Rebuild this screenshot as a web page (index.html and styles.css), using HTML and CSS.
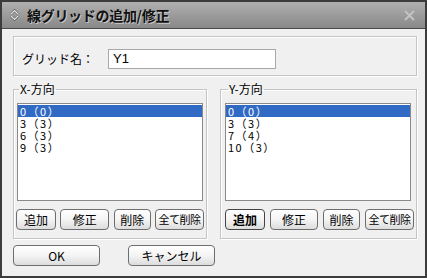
FILE: index.html
```html
<!DOCTYPE html>
<html lang="ja">
<head>
    <meta charset="UTF-8">
    <title>線グリッドの追加/修正</title>
    <link rel="stylesheet" href="styles.css">
</head>
<body>
    <div class="window">
        <div class="titlebar">
            <svg class="title-icon" width="9" height="12" viewBox="0 0 9 12">
                <path d="M1 5 L4.5 1.5 L8 5" fill="none" stroke="#555" stroke-width="2.4"/>
                <path d="M1 5 L4.5 1.5 L8 5" fill="none" stroke="#e8e8e8" stroke-width="1.2"/>
                <path d="M1 7 L4.5 10.5 L8 7" fill="none" stroke="#555" stroke-width="2.4"/>
                <path d="M1 7 L4.5 10.5 L8 7" fill="none" stroke="#e8e8e8" stroke-width="1.2"/>
            </svg>
            <span class="title">線グリッドの追加/修正</span>
            <svg class="close" width="11" height="11" viewBox="0 0 11 11">
                <path d="M1 1 L10 10 M10 1 L1 10" stroke="#c4c4c4" stroke-width="1.8"/>
            </svg>
        </div>
        <div class="content">
            <div class="namebox">
                <span class="label">グリッド名：</span>
                <input class="text" type="text" value="Y1">
            </div>
            <div class="groups">
                <fieldset class="group group-x">
                    <legend>X-方向</legend>
                    <ul class="listbox">
                        <li class="selected">0（0）</li>
                        <li>3（3）</li>
                        <li>6（3）</li>
                        <li>9（3）</li>
                    </ul>
                    <div class="btnrow">
                        <button class="btn w40">追加</button>
                        <button class="btn w49">修正</button>
                        <button class="btn w37">削除</button>
                        <button class="btn w49 tight">全て削除</button>
                    </div>
                </fieldset>
                <fieldset class="group group-y">
                    <legend>Y-方向</legend>
                    <ul class="listbox">
                        <li class="selected">0（0）</li>
                        <li>3（3）</li>
                        <li>7（4）</li>
                        <li>10（3）</li>
                    </ul>
                    <div class="btnrow">
                        <button class="btn w40 bold">追加</button>
                        <button class="btn w48">修正</button>
                        <button class="btn w37">削除</button>
                        <button class="btn w49 tight">全て削除</button>
                    </div>
                </fieldset>
            </div>
            <div class="footer">
                <button class="btn big">OK</button>
                <button class="btn big">キャンセル</button>
            </div>
        </div>
    </div>
</body>
</html>
```

FILE: styles.css
```css
body {
    margin: 0;
    font-family: "Noto Sans CJK JP", "Liberation Sans", sans-serif;
    font-size: 12px;
    color: #000;
}
.window {
    width: 427px;
    height: 278px;
    box-sizing: border-box;
    border: 2px solid #3c3c3c;
    background-color: #f0f0f0;
}
.titlebar {
    height: 26px;
    border-bottom: 1px solid #4a4a4a;
    background: linear-gradient(#b0b0b0, #888888);
    display: flex;
    align-items: center;
    padding: 0 10px 0 8px;
}
.title-icon {
    margin-right: 8px;
}
.title {
    font-size: 14px;
    font-weight: bold;
    color: #111;
    text-shadow: 1px 1px 0 #c8c8c8;
    letter-spacing: -0.3px;
}
.close {
    margin-left: auto;
}
.content {
    padding: 7px 8px 0 11px;
}
.namebox {
    height: 40px;
    box-sizing: border-box;
    border: 1px solid #c4c4c4;
    box-shadow: inset 1px 1px 0 #fff, 1px 1px 0 #fff;
    display: flex;
    align-items: center;
    padding: 5px 8px 0 8px;
}
.label {
    width: 86px;
}
.text {
    width: 168px;
    height: 20px;
    box-sizing: border-box;
    border: 1px solid #a8a8a8;
    padding: 0 4px;
    font-family: "Liberation Sans", sans-serif;
    font-size: 13px;
    background: #fff;
}
.groups {
    display: flex;
    gap: 13px;
    margin-top: 6px;
}
.group {
    margin: 0;
    height: 157px;
    box-sizing: border-box;
    border: 1px solid #c4c4c4;
    box-shadow: inset 1px 1px 0 #fff, 1px 1px 0 #fff;
    padding: 7px 2px 7px 2px;
}
.group-x {
    width: 194px;
}
.group-y {
    width: 197px;
    padding-left: 4px;
}
legend {
    padding: 0 1px;
    margin-left: 3px;
    line-height: 14px;
    font-size: 12px;
}
.listbox {
    list-style: none;
    margin: 0 1px;
    padding: 1px 0 0 0;
    height: 98px;
    box-sizing: border-box;
    border: 1px solid #8a8a8a;
    background: #fff;
    font-size: 11px;
    line-height: 12px;
    letter-spacing: 1.5px;
}
.group-y .listbox {
    margin: 0 3px 0 0;
}
.listbox li {
    padding-left: 2px;
    height: 12px;
    white-space: nowrap;
}
.listbox .selected {
    background-color: #316ac5;
    color: #fff;
}
.btnrow {
    display: flex;
    justify-content: space-between;
    margin-top: 8px;
}
.btn {
    height: 21px;
    box-sizing: border-box;
    border: 1px solid #6e6e6e;
    border-radius: 4px;
    background: linear-gradient(#ffffff, #f4f4f4 50%, #dcdcdc);
    font-family: "Noto Sans CJK JP", sans-serif;
    font-size: 12px;
    padding: 0;
    color: #000;
    line-height: 19px;
    white-space: nowrap;
}
.tight {
    font-size: 11px;
    letter-spacing: -0.5px;
}
.bold {
    font-weight: bold;
    border-color: #444;
}
.w37 { width: 37px; }
.w40 { width: 40px; }
.w48 { width: 48px; }
.w49 { width: 49px; }
.footer {
    display: flex;
    gap: 28px;
    margin-top: 6px;
}
.big {
    width: 87px;
}
```
